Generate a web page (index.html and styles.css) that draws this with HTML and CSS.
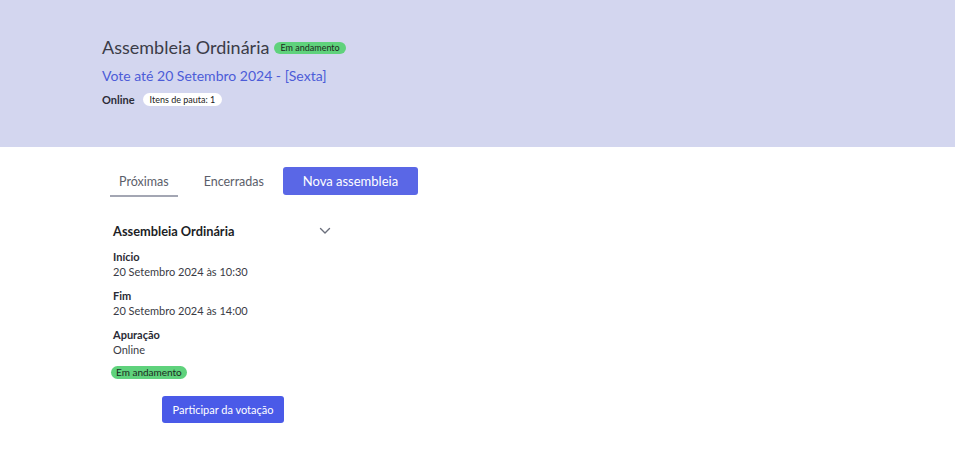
FILE: index.html
```html
<!DOCTYPE html>
<html lang="pt-BR">
<head>
    <meta charset="UTF-8">
    <meta name="viewport" content="width=device-width, initial-scale=1.0">
    <title>Assembleias</title>
    <link rel="stylesheet" href="styles.css">
</head>
<body>

<header class="hero">
    <div class="hero-inner">
        <div class="hero-title">
            <h1>Assembleia Ordinária</h1>
            <span class="status">Em andamento</span>
        </div>
        <p class="hero-deadline">Vote até 20 Setembro 2024 - [Sexta]</p>
        <div class="hero-meta">
            <strong>Online</strong>
            <span class="chip">Itens de pauta: 1</span>
        </div>
    </div>
</header>

<main class="content">
    <nav class="tabs">
        <a class="tab active" href="#">Próximas</a>
        <a class="tab" href="#">Encerradas</a>
        <button class="btn btn-new">Nova assembleia</button>
    </nav>

    <section class="card">
        <div class="card-head">
            <h2>Assembleia Ordinária</h2>
            <svg class="chevron" width="12" height="8" viewBox="0 0 12 8">
                <path d="M1.5 1.5 L6 6 L10.5 1.5" fill="none" stroke="#6b6f7c" stroke-width="1.4" stroke-linecap="round" stroke-linejoin="round"/>
            </svg>
        </div>
        <dl class="details">
            <dt>Início</dt>
            <dd>20 Setembro 2024 às 10:30</dd>
            <dt>Fim</dt>
            <dd>20 Setembro 2024 às 14:00</dd>
            <dt>Apuração</dt>
            <dd>Online</dd>
        </dl>
        <span class="status status-card">Em andamento</span>
        <div class="card-actions">
            <button class="btn btn-vote">Participar da votação</button>
        </div>
    </section>
</main>

</body>
</html>
```

FILE: styles.css
```css
* {
  margin: 0;
  padding: 0;
  box-sizing: border-box;
}

body {
  font-family: Lato, "Open Sans", sans-serif;
  background: #ffffff;
  color: #222430;
}

.hero {
  background: #d3d6ef;
  height: 147px;
}

.hero-inner {
  padding: 36px 0 0 102px;
}

.hero-title {
  display: flex;
  align-items: center;
  gap: 5px;
}

.hero-title h1 {
  font-size: 18px;
  font-weight: 400;
  color: #3b3c48;
}

.status {
  display: inline-block;
  background: #5fd27c;
  color: #1c2a1f;
  font-size: 9px;
  line-height: 12px;
  padding: 0 6px;
  border-radius: 8px;
}

.hero-title .status {
  margin-top: 2px;
}

.hero-deadline {
  margin-top: 9px;
  font-size: 14px;
  color: #4c5cd8;
}

.hero-meta {
  display: flex;
  align-items: center;
  gap: 8px;
  margin-top: 9px;
  font-size: 11px;
}

.hero-meta strong {
  color: #2c2d38;
}

.chip {
  background: #ffffff;
  border-radius: 8px;
  font-size: 9px;
  padding: 1px 7px;
  color: #222;
}

.content {
  padding: 20px 0 0 110px;
}

.tabs {
  display: flex;
  align-items: center;
}

.tab {
  font-size: 12.5px;
  color: #5b5e6a;
  text-decoration: none;
  padding: 7px 9px 6px;
  border-bottom: 2px solid transparent;
  margin-right: 17px;
}

.tab + .tab {
  margin-right: 10px;
}

.tab.active {
  border-bottom-color: #a3a6b3;
}

.btn {
  border: none;
  color: #ffffff;
  font-family: inherit;
  cursor: pointer;
  border-radius: 3px;
}

.btn-new {
  background: #5a67e6;
  font-size: 13px;
  width: 135px;
  height: 28px;
  margin-top: -2px;
}

.card {
  width: 223px;
  margin-top: 26px;
  padding-left: 3px;
}

.card-head {
  display: flex;
  justify-content: space-between;
  align-items: center;
}

.card-head h2 {
  font-size: 12.8px;
  font-weight: 700;
  color: #1d1e26;
}

.chevron {
  margin-right: 2px;
}

.details {
  margin-top: 10px;
  font-size: 11px;
  line-height: 15px;
}

.details dt {
  font-weight: 700;
  color: #2a2b35;
}

.details dd {
  color: #3a3b45;
  margin-bottom: 9px;
}

.status-card {
  display: block;
  width: fit-content;
  font-size: 10px;
  line-height: 13px;
  margin-left: -2px;
  margin-top: 1px;
  padding: 0 5px;
}

.card-actions {
  padding: 17px 0 0 49px;
}

.btn-vote {
  background: #4a5ae8;
  font-size: 11px;
  width: 122px;
  height: 27px;
}
```
